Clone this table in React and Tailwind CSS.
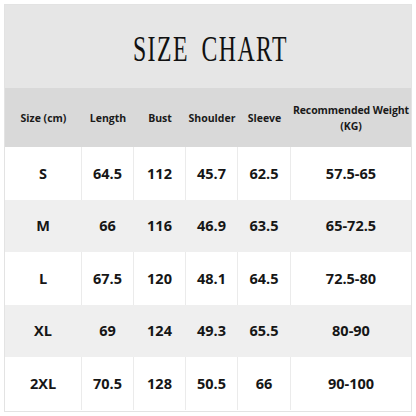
import React from "react";

const cols = ["w-[77px]", "w-[52px]", "w-[52px]", "w-[52px]", "w-[53px]", "flex-1"];
const headers = ["Size (cm)", "Length", "Bust", "Shoulder", "Sleeve"];
const rows = [
  ["S", "64.5", "112", "45.7", "62.5", "57.5-65"],
  ["M", "66", "116", "46.9", "63.5", "65-72.5"],
  ["L", "67.5", "120", "48.1", "64.5", "72.5-80"],
  ["XL", "69", "124", "49.3", "65.5", "80-90"],
  ["2XL", "70.5", "128", "50.5", "66", "90-100"],
];
const heights = ["h-[53px]", "h-[52px]", "h-[53px]", "h-[52px]", "h-[53px]"];

export default function App() {
  return (
    <div className="w-[416px] h-[416px] bg-white p-[4px]">
      <div className="w-[408px] h-[408px] border border-[#e3e3e3] flex flex-col">
        <div className="h-[83px] bg-[#e6e6e6] flex items-center justify-center pt-[5px] pl-[4px]">
          <span
            className="inline-block text-[36px] leading-none text-[#111] tracking-[2.2px] [word-spacing:8px] scale-x-[0.66] whitespace-nowrap"
            style={{ fontFamily: '"Liberation Serif", serif' }}
          >
            SIZE CHART
          </span>
        </div>
        <div
          className="h-[59px] bg-[#d9d9d9] flex items-center text-[10.5px] font-bold text-[#1a1a1a] leading-[16px]"
          style={{ fontFamily: '"Open Sans", sans-serif' }}
        >
          {headers.map((h, i) => (
            <div key={i} className={`${cols[i]} text-center whitespace-nowrap`}>{h}</div>
          ))}
          <div className="flex-1 text-center whitespace-nowrap tracking-[-0.1px]">
            Recommended Weight
            <br />
            (KG)
          </div>
        </div>
        {rows.map((r, ri) => {
          const gray = ri % 2 === 1;
          return (
            <div
              key={ri}
              className={`${heights[ri]} flex text-[14.5px] font-bold text-[#161616] ${gray ? "bg-[#efefef]" : "bg-white"}`}
              style={{ fontFamily: '"Open Sans", sans-serif' }}
            >
              {r.map((v, ci) => (
                <div
                  key={ci}
                  className={`${cols[ci]} flex items-center justify-center ${ci < 5 ? (gray ? "border-r border-[#efefef]" : "border-r border-[#ebebeb]") : ""}`}
                >
                  {v}
                </div>
              ))}
            </div>
          );
        })}
      </div>
    </div>
  );
}
